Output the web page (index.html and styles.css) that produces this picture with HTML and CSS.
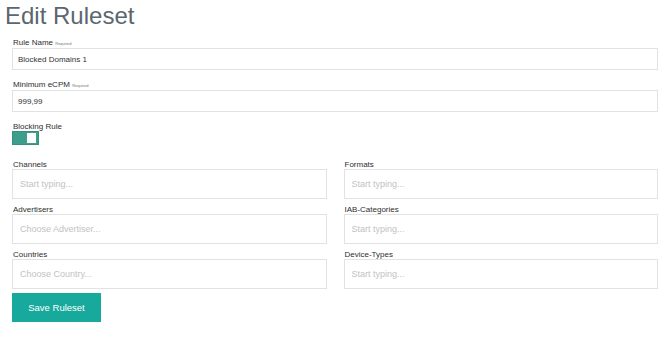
FILE: index.html
```html
<!DOCTYPE html>
<html lang="en">
<head>
    <meta charset="UTF-8">
    <meta name="viewport" content="width=device-width, initial-scale=1.0">
    <title>Edit Ruleset</title>
    <link rel="stylesheet" href="styles.css">
</head>
<body>
    <h1 class="page-title">Edit Ruleset</h1>

    <form class="ruleset-form">
        <div class="field">
            <label class="field-label">Rule Name <span class="required">Required</span></label>
            <input class="text-input" type="text" value="Blocked Domains 1">
        </div>

        <div class="field">
            <label class="field-label">Minimum eCPM <span class="required">Required</span></label>
            <input class="text-input" type="text" value="999,99">
        </div>

        <div class="field field-toggle">
            <label class="field-label">Blocking Rule</label>
            <div class="toggle">
                <span class="toggle-knob"></span>
            </div>
        </div>

        <!-- two column selectors -->
        <div class="select-grid">
            <div class="select-field">
                <label class="field-label">Channels</label>
                <input class="select-input" type="text" placeholder="Start typing...">
            </div>
            <div class="select-field">
                <label class="field-label">Formats</label>
                <input class="select-input" type="text" placeholder="Start typing...">
            </div>
            <div class="select-field">
                <label class="field-label">Advertisers</label>
                <input class="select-input" type="text" placeholder="Choose Advertiser...">
            </div>
            <div class="select-field">
                <label class="field-label">IAB-Categories</label>
                <input class="select-input" type="text" placeholder="Start typing...">
            </div>
            <div class="select-field">
                <label class="field-label">Countries</label>
                <input class="select-input" type="text" placeholder="Choose Country...">
            </div>
            <div class="select-field">
                <label class="field-label">Device-Types</label>
                <input class="select-input" type="text" placeholder="Start typing...">
            </div>
        </div>

        <button class="save-button" type="button">Save Ruleset</button>
    </form>
</body>
</html>
```

FILE: styles.css
```css
body {
    margin: 0;
    font-family: "Liberation Sans", Arial, sans-serif;
    background-color: #fff;
    color: #333;
}

.page-title {
    margin: 0 0 5px;
    padding: 0 5px;
    font-size: 24px;
    line-height: 32px;
    font-weight: normal;
    color: #5b6670;
}

.ruleset-form {
    padding: 0 12px;
}

.field {
    display: flex;
    flex-direction: column;
    margin-bottom: 9px;
}

.field-label {
    display: block;
    font-size: 8px;
    line-height: 9px;
    padding-top: 1px;
    padding-left: 1px;
    color: #2e2e2e;
}

.required {
    font-size: 4px;
    color: #777;
}

.text-input {
    box-sizing: border-box;
    width: 100%;
    height: 22px;
    margin: 0;
    padding: 0 5px;
    border: 1px solid #e2e2e2;
    background: #fff;
    font-family: inherit;
    font-size: 8px;
    color: #333;
    outline: none;
}

.field-toggle {
    margin-bottom: 14px;
    margin-top: 1px;
}

.toggle {
    box-sizing: border-box;
    width: 27px;
    height: 14px;
    background-color: #3d9e8c;
    border: 1px solid #35917f;
    display: flex;
    align-items: center;
    justify-content: flex-end;
    padding-right: 2px;
}

.toggle-knob {
    width: 9px;
    height: 10px;
    background: #fff;
}

.select-grid {
    display: grid;
    grid-template-columns: 1fr 1fr;
    column-gap: 17px;
    row-gap: 5px;
}

.select-field {
    display: flex;
    flex-direction: column;
}

.select-input {
    box-sizing: border-box;
    width: 100%;
    height: 30px;
    margin: 0;
    padding: 0 7px;
    border: 1px solid #e2e2e2;
    background: #fff;
    font-family: inherit;
    font-size: 9px;
    color: #333;
    outline: none;
}

.select-input::placeholder {
    color: #c2c2c2;
}

.save-button {
    margin-top: 4px;
    width: 89px;
    height: 29px;
    border: none;
    border-radius: 0;
    background-color: #17a99b;
    color: #fff;
    font-family: inherit;
    font-size: 9.5px;
    cursor: pointer;
}
```
